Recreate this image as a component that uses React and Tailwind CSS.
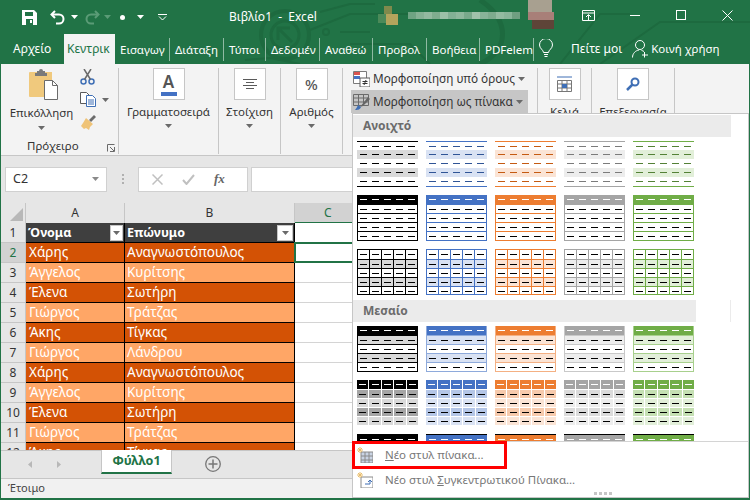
/* ----- the data ----- */

const rows = [
  ["Χάρης", "Αναγνωστόπουλος"],
  ["Άγγελος", "Κυρίτσης"],
  ["Έλενα", "Σωτήρη"],
  ["Γιώργος", "Τράτζας"],
  ["Άκης", "Τίγκας"],
  ["Γιώργος", "Λάνδρου"],
  ["Χάρης", "Αναγνωστόπουλος"],
  ["Άγγελος", "Κυρίτσης"],
  ["Έλενα", "Σωτήρη"],
  ["Γιώργος", "Τράτζας"],
  ["Άκης", "Τίγκας"],
];

// labels are cut short in the window, as the ribbon does it
const tabs = [
  ["Εισαγωγ", "w-[55px]"],
  ["Διάταξη", "w-[54px]"],
  ["Τύποι", "w-[42px]"],
  ["Δεδομέν", "w-[54px]"],
  ["Αναθεώ", "w-[53px]"],
  ["Προβολ", "w-[54px]"],
  ["Βοήθεια", "w-[53px]"],
  ["PDFelem", "w-[54px]"],
];

const tones = {
  black: {
    line: "border-black", soft: "border-black", head: "bg-black", dash: "bg-black",
    stripe: "bg-[#d9d9d9]", mid: "bg-[#a5a5a5]", pale: "bg-[#d9d9d9]",
  },
  blue: {
    line: "border-[#4472c4]", soft: "border-[#8eaadb]", head: "bg-[#4472c4]", dash: "bg-[#2f5496]",
    stripe: "bg-[#d9e2f3]", mid: "bg-[#b4c6e7]", pale: "bg-[#d9e2f3]",
  },
  orange: {
    line: "border-[#ed7d31]", soft: "border-[#f4b083]", head: "bg-[#ed7d31]", dash: "bg-[#c55a11]",
    stripe: "bg-[#fbe4d5]", mid: "bg-[#f7caac]", pale: "bg-[#fbe4d5]",
  },
  gray: {
    line: "border-[#a5a5a5]", soft: "border-[#c9c9c9]", head: "bg-[#a5a5a5]", dash: "bg-[#7b7b7b]",
    stripe: "bg-[#ededed]", mid: "bg-[#dbdbdb]", pale: "bg-[#ededed]",
  },
  green: {
    line: "border-[#70ad47]", soft: "border-[#a8d08d]", head: "bg-[#70ad47]", dash: "bg-[#538135]",
    stripe: "bg-[#e2efd9]", mid: "bg-[#c5e0b3]", pale: "bg-[#e2efd9]",
  },
};

const toneNames = ["black", "blue", "orange", "gray", "green"];
const five = [0, 1, 2, 3, 4];

/* ----- small drawings ----- */

function Caret({ className = "fill-[#6a6a6a]" }) {
  return (
    <svg width="7" height="4" viewBox="0 0 7 4" className={className}>
      <path d="M0 0h7L3.5 4z" />
    </svg>
  );
}

function Backdrop() {
  return (
    <svg className="absolute left-0 top-0" width="750" height="64" fill="none" stroke="#1d6a3f" strokeWidth="2">
      <circle cx="285" cy="35" r="24" strokeWidth="4" />
      <circle cx="285" cy="35" r="14" strokeWidth="3" />
      <path d="M278 40V28h12M278 28l14 14" strokeWidth="3" />
      <path d="M245 60l25-2 30 6M310 30l40-16h60M320 12l30-8h25M340 32h30M600 64l60-42h90M560 64l40-50h30M430 64l-20-20h-60" />
      <circle cx="326" cy="32" r="3" />
      <path d="M480 0c30 20 30 50 0 64" strokeWidth="5" />
    </svg>
  );
}

// the blurred account name
function AccountBlur() {
  const strip = ["#6fa383", "#86b195", "#93b9a0", "#7fad8f", "#9cc0a8", "#83b095", "#8fb79d", "#79a98b", "#a0c2ab", "#88b398", "#7dab8d", "#94bba1", "#8ab59a", "#6f9f81"];
  return (
    <svg width="190" height="34" className="absolute left-[376px] top-0">
      <rect x="8" y="6" width="8" height="8" fill="#7f8a4c" />
      <rect x="2" y="14" width="8" height="9" fill="#4c8a59" />
      <rect x="10" y="14" width="12" height="11" fill="#b3a45c" />
      {strip.map((c, i) => (
        <rect key={i} x={32 + i * 8} y="12" width="8" height="7" fill={c} />
      ))}
      <rect x="152" y="0" width="24" height="12" fill="#a8a090" />
      <rect x="152" y="12" width="26" height="8" fill="#a87f78" />
      <rect x="156" y="20" width="22" height="9" fill="#5e4438" />
    </svg>
  );
}

function Dashes({ dash }) {
  return <span className={`block h-px w-[7px] ${dash}`} />;
}

/* one preview of a table style */
function Thumb({ kind, tone }) {
  const t = tones[tone];

  if (kind === "lines") {
    return (
      <div className={`h-[46px] w-[61px] border-b ${t.line}`}>
        {five.map((r) => (
          <div key={r} className={`flex h-[9px] ${r === 0 ? `border-t ${t.line}` : ""} ${r % 2 ? t.stripe : ""}`}>
            {five.map((c) => (
              <div key={c} className="flex flex-1 items-center justify-center">
                <Dashes dash={t.dash} />
              </div>
            ))}
          </div>
        ))}
      </div>
    );
  }

  if (kind === "gaps") {
    return (
      <div className="h-[46px] w-[61px]">
        {five.map((r) => (
          <div key={r} className={`flex h-[9px] gap-px ${r ? "border-t border-white" : ""}`}>
            {five.map((c) => (
              <div
                key={c}
                className={`flex flex-1 items-center justify-center ${r === 0 ? t.head : r % 2 ? t.mid : t.pale}`}
              >
                <Dashes dash={r === 0 ? "bg-white" : "bg-black"} />
              </div>
            ))}
          </div>
        ))}
      </div>
    );
  }

  if (kind === "cut") {
    return (
      <div className={`flex h-[9px] w-[61px] border-t border-black ${t.head}`}>
        {five.map((c) => (
          <div key={c} className="flex flex-1 items-center justify-center">
            <Dashes dash="bg-white" />
          </div>
        ))}
      </div>
    );
  }

  // box, grid and medium all have a frame and row lines
  const frame = kind === "medium" ? t.soft : t.line;
  const head = kind === "grid" ? false : true;
  return (
    <div className={`h-[46px] w-[61px] border-x border-b ${frame} ${kind === "grid" ? "border-t" : ""}`}>
      {five.map((r) => {
        const fill = head && r === 0 ? t.head : (kind === "grid" || kind === "medium") && r % 2 ? t.stripe : "";
        return (
          <div key={r} className={`flex h-[9px] ${r ? `border-t ${frame}` : ""} ${fill}`}>
            {five.map((c) => (
              <div
                key={c}
                className={`flex flex-1 items-center justify-center ${kind === "grid" && c ? `border-l ${frame}` : ""}`}
              >
                <Dashes dash={head && r === 0 ? "bg-white" : "bg-black"} />
              </div>
            ))}
          </div>
        );
      })}
    </div>
  );
}

function ThumbRow({ kind, className = "" }) {
  return (
    <div className={`flex gap-x-[8px] pl-[4px] ${className}`}>
      {toneNames.map((tone) => (
        <Thumb key={tone} kind={kind} tone={tone} />
      ))}
    </div>
  );
}

function SectionLabel({ children, className = "" }) {
  return (
    <div className={`flex h-[22px] items-center bg-[#ebebeb] pl-[10px] text-[12px] font-bold text-[#6c6c6c] ${className}`}>
      {children}
    </div>
  );
}

/* ribbon group with one big square button */
function BigGroup({ width, label, children, caret = true }) {
  return (
    <div className={`flex h-[86px] flex-col items-center border-r border-[#c6c6c6] ${width}`}>
      <div className="flex h-[32px] w-[32px] items-center justify-center border border-[#c6c6c6] bg-white">
        {children}
      </div>
      <span className="mt-[3px] text-[11.5px] leading-[18px] text-[#333]">{label}</span>
      {caret && (
        <span className="mt-[3px]">
          <Caret />
        </span>
      )}
    </div>
  );
}

/* ----- the page ----- */

export default function App() {
  return (
    <div className="relative flex h-[500px] w-[750px] flex-col overflow-hidden bg-[#217346] font-['Noto_Sans',sans-serif]">
      {/* Title bar */}
      <div className="relative flex h-[34px] items-center text-white">
        <Backdrop />
        <AccountBlur />
        <div className="relative ml-[22px] flex items-center">
          <svg width="15" height="15" viewBox="0 0 15 15">
            <path d="M0 0h12l3 3v12H0z" fill="#fff" />
            <path d="M3 2h8v4H3z" fill="#217346" />
            <path d="M4 9h7v6H4z" fill="#217346" />
            <path d="M8 10h2v3H8z" fill="#fff" />
          </svg>
          <svg width="16" height="15" viewBox="0 0 16 15" fill="none" stroke="#fff" strokeWidth="2" className="ml-[13px]">
            <path d="M5 1L1.500 4.500 5 8" />
            <path d="M2 4.500h7a4.500 4.500 0 0 1 0 9H6" />
          </svg>
          <span className="ml-[5px]"><Caret className="fill-white" /></span>
          <svg width="16" height="15" viewBox="0 0 16 15" fill="none" stroke="#5a9b76" strokeWidth="2" className="ml-[6px]">
            <path d="M11 1l3.500 3.500L11 8" />
            <path d="M14 4.500H7a4.500 4.500 0 0 0 0 9h3" />
          </svg>
          <span className="ml-[4px]"><Caret className="fill-[#5a9b76]" /></span>
          <span className="ml-[9px] h-[5px] w-[5px] rounded-full bg-white" />
          <span className="ml-[12px]"><Caret className="fill-white" /></span>
          <svg width="9" height="7" viewBox="0 0 9 7" fill="none" stroke="#fff" className="ml-[14px]">
            <path d="M0 .5h9M1 2.500L4.500 6 8 2.500" />
          </svg>
        </div>
        <span className="absolute left-[229px] top-[7px] whitespace-pre text-[12px] leading-[20px]">Βιβλίο1  -  Excel</span>
        <svg width="15" height="11" viewBox="0 0 15 11" fill="none" stroke="#fff" className="absolute left-[582px] top-[10px]">
          <path d="M.5.500h12v10H.5zM.5 3h12M4 7l2.500-2.500L9 7M6.500 5v5" />
        </svg>
        <span className="absolute left-[630px] top-[15px] h-px w-[10px] bg-white" />
        <span className="absolute left-[676px] top-[10px] h-[10px] w-[10px] border border-white" />
        <svg width="11" height="11" viewBox="0 0 11 11" stroke="#fff" className="absolute left-[722px] top-[10px]">
          <path d="M.5.500l10 10M10.500.500l-10 10" />
        </svg>
      </div>

      {/* Tabs */}
      <div className="relative flex h-[30px] text-[12px] leading-[30px] text-white">
        <div className="w-[64px] pl-[13px]">Αρχείο</div>
        <div className="w-[51px] whitespace-nowrap bg-[#f3f3f3] pl-[3px] text-[#217346]">Κεντρικ</div>
        {tabs.map(([label, width]) => (
          <div key={label} className={`flex items-center ${width}`}>
            <div className="h-[23px] w-full whitespace-nowrap border-r border-[#8fbaa3] pl-[5px] text-[11.5px] leading-[23px]">
              {label}
            </div>
          </div>
        ))}
        <svg width="14" height="19" viewBox="0 0 14 19" fill="none" stroke="#fff" className="ml-[5px] mt-[5px]">
          <path d="M4.500 13.500c0-2.500-4-4-4-7.500a6.500 6.500 0 0 1 13 0c0 3.500-4 5-4 7.500z" />
          <path d="M5 15.500h4M5.500 17.500h3" />
        </svg>
        <span className="ml-[18px]">Πείτε μοι</span>
        <svg width="17" height="18" viewBox="0 0 17 18" fill="none" stroke="#fff" className="ml-[10px] mt-[6px]">
          <circle cx="8" cy="5" r="4.500" />
          <path d="M.5 17.500c0-4 3-7 6.500-7.500M9.500 10.500c1 .2 1.800.5 2.500 1" />
          <path d="M12.500 12v5.500M10 15h6" />
        </svg>
        <span className="ml-[2px] whitespace-nowrap text-[11.5px]">Κοινή χρήση</span>
      </div>

      {/* Ribbon */}
      <div className="mx-[1px] flex h-[92px] border-b border-[#c6c6c6] bg-[#f3f3f3] pt-[4px]">
        <div className="relative flex h-[86px] w-[118px] border-r border-[#c6c6c6]">
          <div className="-mr-[2px] flex w-[81px] flex-col items-center">
            <svg width="29" height="32" viewBox="0 0 29 32" className="ml-[4px]">
              <path d="M1 4h22v25H1a1 1 0 0 1-1-1V5a1 1 0 0 1 1-1z" fill="#f0c97d" />
              <path d="M8 3h2a2 2 0 0 1 4 0h2v2h2v3H6V5h2z" fill="#7a7a7a" />
              <path d="M15.500 12.500h8l5 5v14h-13z" fill="#fff" stroke="#6b6b6b" />
              <path d="M23.500 12.500v5h5" fill="none" stroke="#6b6b6b" />
            </svg>
            <span className="mt-[4px] text-[11.5px] leading-[18px] text-[#333]">Επικόλληση</span>
            <span className="mt-[4px]"><Caret /></span>
          </div>
          <div className="flex flex-col pt-[1px]">
            <svg width="15" height="16" viewBox="0 0 15 16" fill="none" stroke="#3f6fb5" strokeWidth="1.500">
              <circle cx="3.500" cy="12.500" r="2.500" />
              <circle cx="11.500" cy="12.500" r="2.500" />
              <path d="M4.500 10.500L11 0M10.500 10.500L4 0" stroke="#6b6b6b" />
            </svg>
            <div className="mt-[7px] flex items-center">
              <svg width="16" height="15" viewBox="0 0 16 15" fill="#fff" stroke="#5a5a5a">
                <path d="M.5.500h6l3 3v8h-9z" />
                <path d="M6.500 3.500h6l3 3v8h-9z" stroke="#3f6fb5" />
                <path d="M8 8h6M8 10h6M8 12h6" stroke="#3f6fb5" />
              </svg>
              <span className="ml-[6px]"><Caret /></span>
            </div>
            <svg width="16" height="15" viewBox="0 0 16 15" className="mt-[8px]">
              <path d="M9 5L14 0l2 2-5 5z" fill="#6b6b6b" />
              <path d="M6 3l7 6-3 3-1 3-3-2-2 1-3-3 2-3z" fill="#efc377" />
            </svg>
          </div>
          <span className="absolute bottom-[-1px] left-[26px] text-[11.5px] leading-[18px] text-[#333]">Πρόχειρο</span>
          <svg width="8" height="8" viewBox="0 0 8 8" fill="none" stroke="#6a6a6a" className="absolute bottom-[2px] left-[106px]">
            <path d="M.5 7.500v-7h7M7.500 3v4.500H3M3 3l4 4" />
          </svg>
        </div>

        <BigGroup width="w-[100px]" label="Γραμματοσειρά">
          <div className="flex flex-col items-center">
            <span className="text-[17px] font-semibold leading-[18px] text-[#555]">A</span>
            <span className="mt-[1px] h-[4px] w-[16px] bg-[#4472c4]" />
          </div>
        </BigGroup>
        <BigGroup width="w-[62px]" label="Στοίχιση">
          <svg width="14" height="11" viewBox="0 0 14 11" stroke="#5a5a5a">
            <path d="M0 .5h14M3 3.500h8M0 6.500h14M3 9.500h8" />
          </svg>
        </BigGroup>
        <BigGroup width="w-[62px]" label="Αριθμός">
          <span className="text-[15px] font-medium text-[#555]">%</span>
        </BigGroup>

        <div className="flex h-[86px] w-[195px] flex-col border-r border-[#c6c6c6] pl-[10px] text-[11.75px] text-[#333]">
          <div className="flex h-[22px] items-center">
            <svg width="17" height="16" viewBox="0 0 17 16">
              <path d="M.5.500h13v12H.5z" fill="#fff" stroke="#7a7a7a" />
              <path d="M1 1h6v3H1z" fill="#d9534f" />
              <path d="M1 5h6v3H1z" fill="#4472c4" />
              <path d="M7 7h10v9H7z" fill="#fff" stroke="#5a5a5a" />
              <path d="M9.500 10.500h5M9.500 12.500h5M13 9l-2 5" stroke="#333" fill="none" />
            </svg>
            <span className="ml-[3px] whitespace-nowrap">Μορφοποίηση υπό όρους</span>
            <span className="ml-[3px]"><Caret /></span>
          </div>
          <div className="-ml-[2px] flex h-[23px] w-[177px] items-center bg-[#c6c6c6] pl-[2px]">
            <svg width="17" height="16" viewBox="0 0 17 16" fill="none" stroke="#6b6b6b">
              <path d="M.5.500h15v11H.5zM.5 4h15M.5 8h15M5.500 .5v11M10.500 .5v11" />
              <path d="M15 3l2 2-7 7-3 1z" fill="#666" stroke="none" />
              <path d="M5 11l3 2c-1 3-4 3-6 3 1-1 2-3 3-5z" fill="#3f6fb5" stroke="none" />
            </svg>
            <span className="ml-[3px] whitespace-nowrap">Μορφοποίηση ως πίνακα</span>
            <span className="ml-[3px]"><Caret /></span>
          </div>
        </div>

        <BigGroup width="w-[54px]" label="Κελιά" caret={false}>
          <svg width="17" height="16" viewBox="0 0 17 16" fill="none" stroke="#777">
            <path d="M1 1h15" stroke="#3f6fb5" />
            <path d="M1.500 4.500h14v11h-14zM1.500 8h14M1.500 12h14M6 4.500v11M11 4.500v11" />
            <path d="M6 8h5v4H6z" fill="#3f6fb5" stroke="none" />
          </svg>
        </BigGroup>
        <BigGroup width="w-[83px]" label="Επεξεργασία" caret={false}>
          <svg width="14" height="14" viewBox="0 0 14 14" fill="none" stroke="#3f6fb5" strokeWidth="2">
            <circle cx="9" cy="5" r="3.500" />
            <path d="M6.500 7.500L1 13" strokeWidth="2.500" />
          </svg>
        </BigGroup>
      </div>

      {/* Formula bar */}
      <div className="mx-[1px] flex h-[47px] items-center bg-[#e6e6e6] pb-[1px]">
        <div className="ml-[4px] flex h-[25px] w-[102px] items-center justify-between border border-[#d0d0d0] bg-white pl-[7px] pr-[7px] text-[12.5px] text-[#333]">
          C2
          <Caret className="fill-[#8a8a8a]" />
        </div>
        <div className="ml-[15px] flex flex-col gap-[2px]">
          <span className="h-[2px] w-[2px] bg-[#b0b0b0]" />
          <span className="h-[2px] w-[2px] bg-[#b0b0b0]" />
          <span className="h-[2px] w-[2px] bg-[#b0b0b0]" />
        </div>
        <div className="ml-[14px] flex h-[25px] w-[110px] items-center border border-[#d0d0d0] bg-white pl-[13px]">
          <svg width="11" height="11" viewBox="0 0 11 11" stroke="#c0c0c0" strokeWidth="1.500">
            <path d="M.5.500l10 10M10.500.500l-10 10" />
          </svg>
          <svg width="13" height="11" viewBox="0 0 13 11" fill="none" stroke="#c0c0c0" strokeWidth="2" className="ml-[19px]">
            <path d="M1 6l3.500 4L12 1" />
          </svg>
          <span className="ml-[19px] font-['Liberation_Serif',serif] text-[13px] font-bold italic text-[#666]">fx</span>
        </div>
        <div className="ml-[3px] h-[25px] flex-1 border border-[#d0d0d0] bg-white" />
      </div>

      {/* Column headers */}
      <div className="mx-[1px] flex h-[20px] bg-[#e6e6e6] text-[12px] leading-[19px] text-[#333]">
        <div className="flex w-[25px] items-end justify-end border-r border-[#c6c6c6] p-[2px]">
          <svg width="13" height="13" viewBox="0 0 13 13" className="fill-[#b8b8b8]">
            <path d="M13 0v13H0z" />
          </svg>
        </div>
        <div className="w-[99px] border-r border-[#c6c6c6] text-center">A</div>
        <div className="w-[170px] border-r border-[#c6c6c6] text-center">B</div>
        <div className="flex-1 border-b border-[#217346] bg-[#d2d2d2] pl-[29px] text-[#217346]">C</div>
      </div>

      {/* Sheet */}
      <div className="mx-[1px] h-[227px] overflow-hidden bg-white text-[13.5px] leading-[19px]">
        <div className="flex h-[20px]">
          <div className="w-[25px] border-b border-r border-[#c6c6c6] bg-[#e6e6e6] text-center text-[12px] text-[#333]">1</div>
          <div className="flex w-[99px] items-center justify-between border-b border-r border-black bg-[#3f3f3f] pl-[2px] pr-[1px] text-[12.5px] font-bold text-white">
            Όνομα
            <span className="flex h-[16px] w-[13px] items-center justify-center border border-[#c6c6c6] bg-white">
              <Caret />
            </span>
          </div>
          <div className="flex w-[170px] items-center justify-between border-b border-r border-black bg-[#3f3f3f] pl-[2px] pr-[1px] text-[12.5px] font-bold text-white">
            Επώνυμο
            <span className="flex h-[16px] w-[16px] items-center justify-center border border-[#c6c6c6] bg-white">
              <Caret />
            </span>
          </div>
          <div className="flex-1 border-b border-[#d4d4d4]" />
        </div>
        {rows.map(([first, last], i) => {
          const fill = i % 2 ? "bg-[#ffa666]" : "bg-[#d35205]";
          return (
            <div key={i} className="flex h-[20px]">
              <div
                className={`w-[25px] border-b border-r border-[#c6c6c6] text-center text-[12px] ${
                  i === 0 ? "bg-[#d2d2d2] text-[#217346]" : "bg-[#e6e6e6] text-[#333]"
                }`}
              >
                {i + 2}
              </div>
              <div className={`w-[99px] border-b border-r border-black pl-[3px] text-white ${fill}`}>{first}</div>
              <div className={`w-[170px] border-b border-r border-black pl-[2px] text-white ${fill}`}>{last}</div>
              <div className={`flex-1 ${i === 0 ? "-ml-px -mt-px h-[21px] border-2 border-[#217346]" : "border-b border-[#d4d4d4]"}`} />
            </div>
          );
        })}
      </div>

      {/* Sheet tabs */}
      <div className="mx-[1px] flex h-[28px] border-t border-[#c6c6c6] bg-[#e6e6e6]">
        <svg width="4" height="7" viewBox="0 0 4 7" className="ml-[27px] mt-[10px] fill-[#b8b8b8]">
          <path d="M4 0v7L0 3.500z" />
        </svg>
        <svg width="4" height="7" viewBox="0 0 4 7" className="ml-[25px] mt-[10px] fill-[#b8b8b8]">
          <path d="M0 0v7l4-3.500z" />
        </svg>
        <div className="ml-[40px] flex h-[24px] w-[71px] -translate-y-px items-center justify-center border-x border-b-2 border-x-[#c6c6c6] border-b-[#217346] bg-white text-[12.5px] font-bold text-[#217346]">
          Φύλλο1
        </div>
        <svg width="16" height="16" viewBox="0 0 16 16" fill="none" stroke="#777" className="ml-[33px] mt-[5px]">
          <circle cx="8" cy="8" r="7.300" strokeWidth="1.300" />
          <path d="M8 3.500v9M3.500 8h9" strokeWidth="1.500" />
        </svg>
      </div>

      {/* Status bar */}
      <div className="mx-[1px] mb-[2px] flex h-[20px] items-center border-t border-[#c6c6c6] bg-[#f1f1f1] pl-[7px] text-[11px] text-[#444]">
        Έτοιμο
      </div>

      {/* Table style gallery, opened over the page */}
      <div className="absolute left-[352px] top-[113px] flex h-[385px] w-[397px] flex-col border border-[#c6c6c6] bg-white">
        <div className="h-[327px] overflow-hidden pt-px">
          <SectionLabel className="w-[378px]">Ανοιχτό</SectionLabel>
          <ThumbRow kind="lines" className="mt-[4px]" />
          <ThumbRow kind="box" className="mt-[8px]" />
          <ThumbRow kind="grid" className="mt-[8px]" />
          <div className="mt-[5px] flex">
            <SectionLabel className="w-[343px]">Μεσαίο</SectionLabel>
            <span className="ml-[34px] h-[22px] w-px bg-[#ebebeb]" />
          </div>
          <ThumbRow kind="medium" className="mt-[4px]" />
          <ThumbRow kind="gaps" className="mt-[8px]" />
          <ThumbRow kind="cut" className="mt-[8px]" />
        </div>
        <div className="flex-1 border-t border-[#d4d4d4] text-[11.5px] text-[#777]">
          <div className="flex h-[26px] items-center pl-[4px]">
            <svg width="16" height="16" viewBox="0 0 16 16" fill="none">
              <path d="M4 5h12v11H4z" fill="#c9d3e3" stroke="#8a8a8a" />
              <path d="M8 5v11M12 5v11M4 9h12M4 13h12" stroke="#8a8a8a" />
              <path d="M3 0v6M0 3h6M1 1l4 4M5 1L1 5" stroke="#e9bd6b" />
            </svg>
            <span className="ml-[12px]"><u>Ν</u>έο στυλ πίνακα...</span>
          </div>
          <div className="flex h-[24px] items-center pl-[4px]">
            <svg width="16" height="16" viewBox="0 0 16 16" fill="none">
              <path d="M4 5h12v11H4z" fill="#fff" stroke="#8a8a8a" />
              <path d="M8 12h5v-4M11 10l2-2 2 2" stroke="#3f6fb5" />
              <path d="M3 0v6M0 3h6M1 1l4 4M5 1L1 5" stroke="#e9bd6b" />
            </svg>
            <span className="ml-[12px]">Νέο στυλ <u>Σ</u>υγκεντρωτικού Πίνακα...</span>
          </div>
          <div className="ml-[241px] flex gap-[2px]">
            {[0, 1, 2, 3].map((d) => (
              <span key={d} className="h-[3px] w-[3px] bg-[#c6c6c6]" />
            ))}
          </div>
        </div>
      </div>

      {/* Red mark from the author of the screenshot */}
      <div className="absolute left-[352px] top-[441px] h-[28px] w-[155px] border-[3px] border-[#ff0000]" />
    </div>
  );
}
